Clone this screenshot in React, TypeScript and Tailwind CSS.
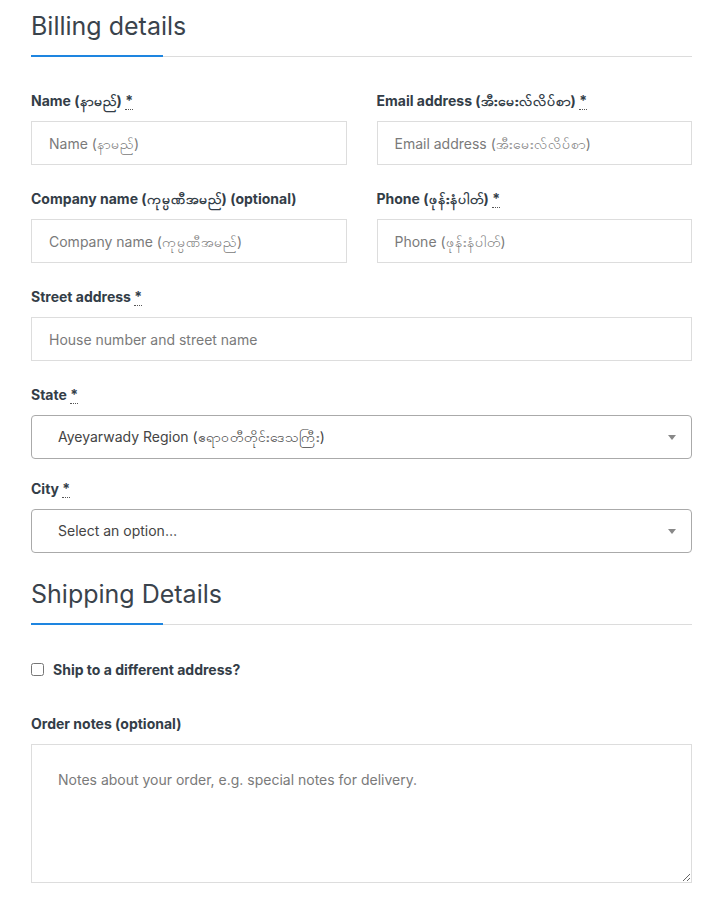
import type { ReactNode } from 'react';

function SectionTitle({ children }: { children: ReactNode }) {
  return (
    <div>
      <h3 className="h-[31px] text-[25px] leading-[31px] font-normal text-[#3a434c]">{children}</h3>
      <div className="flex items-end mt-[13px]">
        <div className="w-[132px] h-[2px] bg-[#1e85e0]" />
        <div className="flex-1 h-px bg-[#dcdcdc]" />
      </div>
    </div>
  );
}

function Label({ text, required }: { text: string; required?: boolean }) {
  return (
    <label className="block h-[21px] overflow-visible whitespace-nowrap text-[14px] leading-[21px] font-bold text-[#333d47] mb-[10px]">
      {text}
      {required && (
        <>
          {' '}
          <abbr title="required" className="no-underline border-b border-dotted border-[#555] text-[#333d47]">*</abbr>
        </>
      )}
    </label>
  );
}

function TextField({ label, placeholder, required }: { label: string; placeholder: string; required?: boolean }) {
  return (
    <div>
      <Label text={label} required={required} />
      <input
        type="text"
        placeholder={placeholder}
        className="block box-border w-full h-[44px] px-[17px] border border-[#dddddd] bg-white text-[14px] leading-[20px] text-[#444] placeholder:text-[#7a7a7a] outline-none"
      />
    </div>
  );
}

function SelectField({ label, value, required }: { label: string; value: string; required?: boolean }) {
  return (
    <div>
      <Label text={label} required={required} />
      <div className="flex items-center justify-between box-border h-[44px] pl-[26px] pr-[15px] border border-[#aaaaaa] rounded-[4px] bg-white overflow-hidden">
        <span className="text-[14px] leading-[20px] text-[#444]">{value}</span>
        <svg width="8" height="5" viewBox="0 0 8 5">
          <path d="M0 0 L8 0 L4 5 Z" fill="#888" />
        </svg>
      </div>
    </div>
  );
}

export default function App() {
  return (
    <div className="bg-white min-h-[900px] pl-[31px] pr-[30px] pt-[11px] font-['Inter',sans-serif]">
      <SectionTitle>Billing details</SectionTitle>

      <div className="grid grid-cols-2 gap-x-[30px] gap-y-[23px] mt-[33px]">
        <TextField label="Name (နာမည်)" placeholder="Name (နာမည်)" required />
        <TextField label="Email address (အီးမေးလ်လိပ်စာ)" placeholder="Email address (အီးမေးလ်လိပ်စာ)" required />
        <TextField label="Company name (ကုမ္ပဏီအမည်) (optional)" placeholder="Company name (ကုမ္ပဏီအမည်)" />
        <TextField label="Phone (ဖုန်းနံပါတ်)" placeholder="Phone (ဖုန်းနံပါတ်)" required />
        <div className="col-span-2">
          <TextField label="Street address" placeholder="House number and street name" required />
        </div>
      </div>

      <div className="flex flex-col gap-[19px] mt-[23px]">
        <SelectField label="State" value="Ayeyarwady Region (ဧရာဝတီတိုင်းဒေသကြီး)" required />
        <SelectField label="City" value="Select an option…" required />
      </div>

      <div className="mt-[26px]">
        <SectionTitle>Shipping Details</SectionTitle>
      </div>

      <label className="flex items-center gap-[9px] h-[21px] mt-[34px] text-[14px] leading-[21px] font-bold text-[#333d47]">
        <input type="checkbox" className="w-[13px] h-[13px] m-0" />
        <span>Ship to a different address?</span>
      </label>

      <div className="mt-[33px]">
        <Label text="Order notes (optional)" />
        <textarea
          placeholder="Notes about your order, e.g. special notes for delivery."
          className="block box-border w-full h-[139px] pt-[25px] px-[26px] border border-[#dddddd] text-[14px] leading-[20px] text-[#444] placeholder:text-[#7a7a7a] outline-none"
        />
      </div>
    </div>
  );
}
